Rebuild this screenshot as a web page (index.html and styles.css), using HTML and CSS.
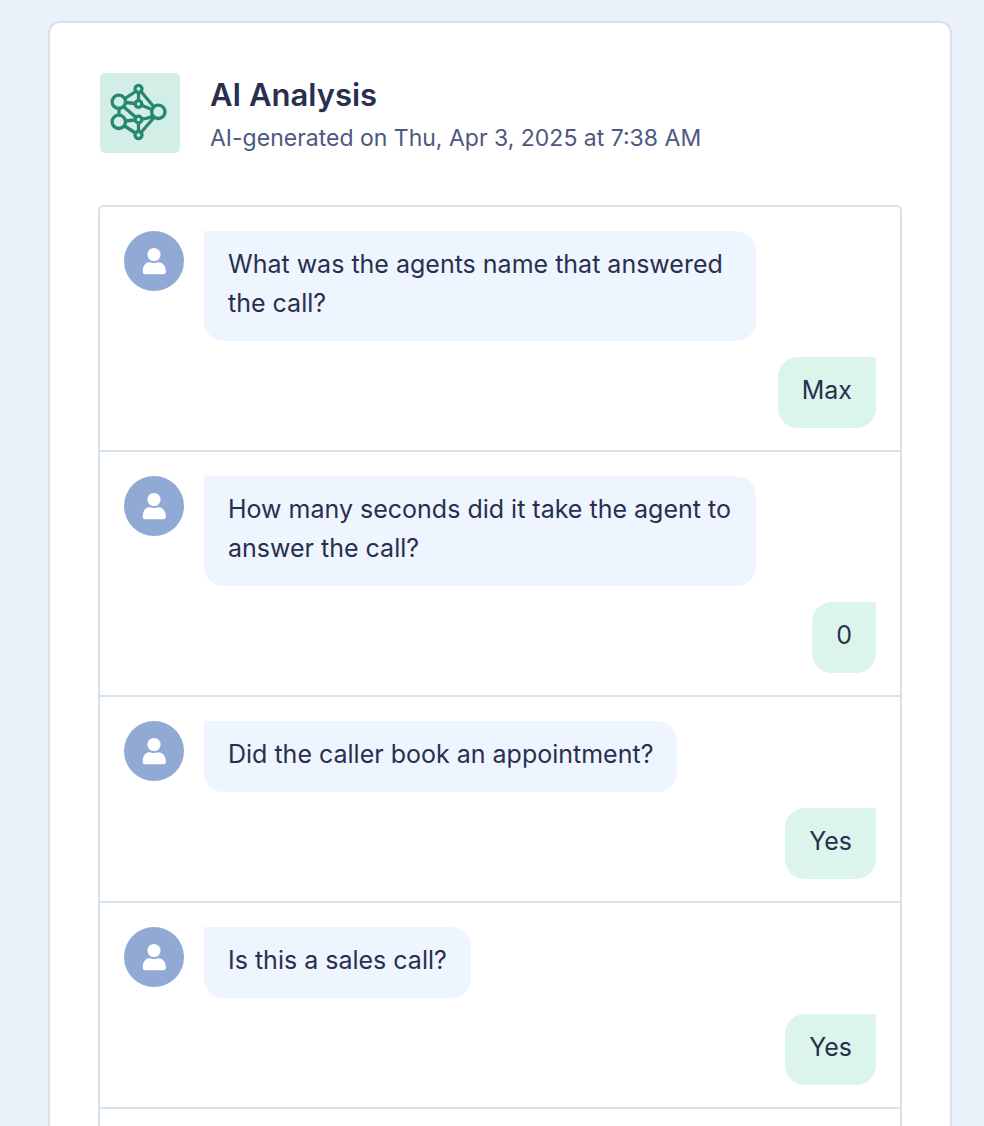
FILE: index.html
```html
<!DOCTYPE html>
<html lang="en">
<head>
    <meta charset="UTF-8">
    <meta name="viewport" content="width=device-width, initial-scale=1.0">
    <title>AI Analysis</title>
    <link rel="stylesheet" href="styles.css">
</head>
<body>
    <svg class="symbols" width="0" height="0" aria-hidden="true">
        <symbol id="user" viewBox="0 0 60 60">
            <circle cx="30" cy="23.5" r="6.6"/>
            <path d="M25.500 31.200 Q30 32.800 34.500 31.200 C39 31.200 41.800 35.500 41.800 40 V41.200 Q41.800 43.200 39.600 43.200 H21 Q18.800 43.200 18.800 41.200 V40 C18.800 35.500 21.200 31.200 25.500 31.200 Z"/>
        </symbol>
    </svg>

    <main class="card">
        <header class="card-header">
            <div class="logo">
                <svg viewBox="0 0 80 80" aria-hidden="true">
                    <path d="M38.500 19V27M38.500 50V58M19 36V41M25 25.500L35.500 18.500M26 29.500L35 30.500M24 34L36 44.500M26 48L35 47M24.500 53L35.500 60M41 18.500L54 34M42 32.500L52 36.500M42 46Q50 45.500 53 42M41 59.500L54.500 44"/>
                    <circle cx="38.500" cy="15.800" r="3.500"/>
                    <circle cx="38.500" cy="31" r="3.300"/>
                    <circle cx="38.500" cy="46.500" r="3.300"/>
                    <circle cx="38.500" cy="62" r="3.500"/>
                    <circle cx="18.800" cy="28.800" r="6.700"/>
                    <circle cx="18.800" cy="48.800" r="6.700"/>
                    <circle cx="58.300" cy="38.800" r="6.700"/>
                </svg>
            </div>
            <div class="titles">
                <h1>AI Analysis</h1>
                <p>AI-generated on Thu, Apr 3, 2025 at 7:38 AM</p>
            </div>
        </header>

        <ul class="chat">
            <li class="chat-item">
                <div class="question">
                    <svg class="avatar" aria-hidden="true"><use href="#user"/></svg>
                    <p class="bubble">What was the agents name that answered the call?</p>
                </div>
                <p class="bubble answer">Max</p>
            </li>
            <li class="chat-item">
                <div class="question">
                    <svg class="avatar" aria-hidden="true"><use href="#user"/></svg>
                    <p class="bubble">How many seconds did it take the agent to answer the call?</p>
                </div>
                <p class="bubble answer">0</p>
            </li>
            <li class="chat-item">
                <div class="question">
                    <svg class="avatar" aria-hidden="true"><use href="#user"/></svg>
                    <p class="bubble">Did the caller book an appointment?</p>
                </div>
                <p class="bubble answer">Yes</p>
            </li>
            <li class="chat-item">
                <div class="question">
                    <svg class="avatar" aria-hidden="true"><use href="#user"/></svg>
                    <p class="bubble">Is this a sales call?</p>
                </div>
                <p class="bubble answer">Yes</p>
            </li>
        </ul>
    </main>
</body>
</html>
```
FILE: styles.css
```css
* {
    box-sizing: border-box;
}

body {
    display: flex;
    flex-direction: column;
    min-height: 100vh;
    margin: 0;
    padding: 21px 32px 0 48px;
    background-color: #eaf1fa;
    color: #292f4e;
    font-family: Inter, "Liberation Sans", sans-serif;
}

h1, p, ul {
    margin: 0;
    padding: 0;
}

.symbols {
    position: absolute;
}

.card {
    display: flex;
    flex-direction: column;
    flex: 1;
    padding: 50px 48px 0;
    background-color: #ffffff;
    border: 2px solid #d8e2ec;
    border-bottom: 0;
    border-radius: 12px 12px 0 0;
}

.card-header {
    display: flex;
    gap: 30px;
    margin: 0 2px 44px;
}

.logo {
    flex: none;
    width: 80px;
    height: 80px;
    background-color: #d3eee6;
    border-radius: 5px;
}

.logo svg {
    display: block;
    fill: none;
    stroke: #268773;
    stroke-width: 3.3;
}

h1 {
    padding-top: 1px;
    font-size: 31px;
    font-weight: 600;
    line-height: 42px;
}

.titles p {
    color: #4d5880;
    font-size: 23px;
    line-height: 45px;
}

.chat {
    flex: 1;
    list-style: none;
    border: 2px solid #d7e2ed;
    border-bottom: 0;
    border-radius: 6px 6px 0 0;
}

.chat-item {
    display: flex;
    flex-direction: column;
    gap: 16px;
    padding: 24px 24px 22px;
    border-bottom: 2px solid #d7e2ed;
}

.question {
    display: flex;
    align-items: flex-start;
    gap: 20px;
    padding-right: 120px;
}

.avatar {
    flex: none;
    width: 60px;
    height: 60px;
    background-color: #90aad5;
    border-radius: 50%;
    fill: #ffffff;
}

.bubble {
    padding: 14px 24px 18px;
    background-color: #eef5ff;
    border-radius: 0 20px 20px 20px;
    font-size: 25px;
    line-height: 39px;
}

.answer {
    align-self: flex-end;
    background-color: #dcf5ec;
    border-radius: 20px 0 20px 20px;
}
```
